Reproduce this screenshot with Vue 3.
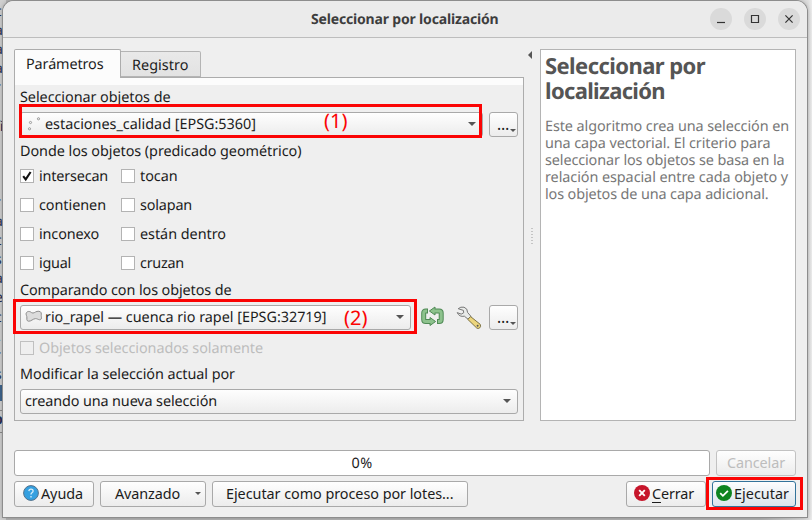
<script setup>
import { ref } from 'vue'

// Spreads the letters of a label so that it takes exactly the given width.
const vFit = {
  mounted(el, { value }) {
    const natural = el.getBoundingClientRect().width
    const count = el.textContent.length
    el.style.letterSpacing = (value - natural) / count + 'px'
  },
}

const predicates = ref([
  { label: 'intersecan', width: 69, on: true },
  { label: 'tocan', width: 37.5, on: false },
  { label: 'contienen', width: 67, on: false },
  { label: 'solapan', width: 52, on: false },
  { label: 'inconexo', width: 60, on: false },
  { label: 'están dentro', width: 86, on: false },
  { label: 'igual', width: 32, on: false },
  { label: 'cruzan', width: 44, on: false },
])

const helpLines = [
  { text: 'Este algoritmo crea una selección en', width: 244 },
  { text: 'una capa vectorial. El criterio para', width: 225.5 },
  { text: 'seleccionar los objetos se basa en la', width: 239.5 },
  { text: 'relación espacial entre cada objeto y', width: 243 },
  { text: 'los objetos de una capa adicional.', width: 223.5 },
]

const backdrop = ['c', 'a', 'a', 'a', 'r', '', 'fi', '-', '-', '-', 'r', 'a', 'c', 's', 'a', 'e', 'c', '\\', 'r', 's']
</script>

<template>
  <div class="screen">
    <div class="behind">
      <span v-for="(c, i) in backdrop" :key="i">{{ c }}</span>
      <i class="picked"></i>
      <b>p</b>
    </div>

    <div class="window">
      <header class="titlebar">
        <span class="title"><span v-fit="187.5">Seleccionar por localización</span></span>
        <div class="controls">
          <button class="round"><svg width="22" height="22"><path d="M7 14.5h8" /></svg></button>
          <button class="round"><svg width="22" height="22"><path d="M7.5 7.5h7v7h-7z" /></svg></button>
          <button class="round"><svg width="22" height="22"><path d="M7.4 7.4l7.2 7.2M14.6 7.4l-7.2 7.2" /></svg></button>
        </div>
      </header>

      <div class="main">
        <section class="left">
          <div class="tabs">
            <div class="tab active"><span v-fit="77.5">Parámetros</span></div>
            <div class="tab"><span v-fit="56.5">Registro</span></div>
          </div>
          <div class="pane">
            <div class="label first"><span v-fit="150.5">Seleccionar objetos de</span></div>
            <div class="row">
              <div class="combo wide">
                <svg class="points" width="20" height="16" viewBox="0 0 20 16">
                  <circle cx="5.5" cy="5.5" r="1.1" /><circle cx="13.5" cy="1.8" r="1.1" /><circle cx="4.5" cy="11.8" r="1.1" />
                </svg>
                <span v-fit="211">estaciones_calidad [EPSG:5360]</span>
                <i class="arrow"></i>
              </div>
              <button class="more"><span>…</span><i class="tiny"></i></button>
            </div>
            <div class="label second"><span v-fit="281.5">Donde los objetos (predicado geométrico)</span></div>
            <div class="checks">
              <label v-for="p in predicates" :key="p.label" class="check">
                <i class="box"><svg v-if="p.on" width="12" height="12" viewBox="0 0 12 12"><path d="M2.2 6.2L4.7 9.4L9.6 2" /></svg></i>
                <span v-fit="p.width">{{ p.label }}</span>
              </label>
            </div>
            <div class="label third"><span v-fit="211.5">Comparando con los objetos de</span></div>
            <div class="row">
              <div class="combo narrow">
                <svg class="poly" width="20" height="16" viewBox="0 0 20 16">
                  <path d="M1.2 4.2C2 2 4.8 2 6.5 3.6C8.5 5 10 2.8 12 2.4C14.8 1.8 16.6 3 16.3 5.2C16 7 16.8 8.4 16.2 10C15 12 12.6 9.6 10.6 9.6C8 9.6 6 12.6 3.4 12.2C1 11.8 2.2 9.4 1.8 7.6C1.5 6.4.8 5.4 1.2 4.2z" />
                </svg>
                <span v-fit="281.5">rio_rapel — cuenca rio rapel [EPSG:32719]</span>
                <i class="arrow"></i>
              </div>
              <svg class="loop" width="24" height="22" viewBox="0 0 24 22">
                <path class="edge" d="M7 5H4.7Q2.7 5 2.7 7v6.5Q2.7 15.5 4.7 15.5H9M16 15.5h2.2q2 0 2-2V7q0-2-2-2H14" />
                <path class="tip" d="M14 1v8L8.4 5zM9 11.5v8l5.6-4z" />
                <path class="fill" d="M6 5H4.7Q2.7 5 2.7 7v6.5Q2.7 15.5 4.7 15.5H10M17 15.5h1.2q2 0 2-2V7q0-2-2-2H13" />
              </svg>
              <svg class="wrench" width="26" height="24" viewBox="0 0 26 24">
                <path class="steel" d="M2.2 2.7Q4.6.5 8 1.2Q11.7 2.4 11.6 6.5L15 10.4L12 13.2L8.4 10.2Q3.5 11.3 1.2 6.6L5.2 8.1L7.7 6.8L7.4 4.4L2.2 2.7z" />
                <path class="grip" d="M14.6 10.6l9.6 7.7q1.1 2.2-.5 3.6q-1.5 1.2-3 .1L11.8 13.4z" />
                <circle cx="21.6" cy="19.8" r="1" />
              </svg>
              <button class="more"><span>…</span><i class="tiny"></i></button>
            </div>
            <label class="check only"><i class="box"></i><span v-fit="224">Objetos seleccionados solamente</span></label>
            <div class="label fourth"><span v-fit="215">Modificar la selección actual por</span></div>
            <div class="combo full"><span v-fit="192">creando una nueva selección</span><i class="arrow"></i></div>
          </div>
        </section>

        <div class="splitter"><i class="collapse"></i><i class="handle"></i></div>

        <aside class="help">
          <h1><span v-fit="160">Seleccionar por</span><br /><span v-fit="120">localización</span></h1>
          <p v-for="l in helpLines" :key="l.text"><span v-fit="l.width">{{ l.text }}</span></p>
        </aside>
      </div>

      <div class="progress-row">
        <div class="progress"><span v-fit="21">0%</span></div>
        <button class="btn cancel"><span v-fit="58">Cancelar</span></button>
      </div>

      <footer class="actions">
        <button class="btn ayuda">
          <svg width="16" height="16" viewBox="0 0 16 16">
            <circle cx="8" cy="8" r="7.4" fill="#35a0e0" stroke="#54718a" />
            <path d="M5.9 6.1Q6 4.1 8 4.1Q10.1 4.1 10.1 6Q10.1 7 8.9 7.8Q8 8.4 8 9.6M8 11v1.4" fill="none" stroke="#d9effb" stroke-width="1.3" />
          </svg>
          <span v-fit="42">Ayuda</span>
        </button>
        <button class="btn avanzado"><span v-fit="65">Avanzado</span><i class="tiny"></i></button>
        <button class="btn lotes"><span v-fit="227.5">Ejecutar como proceso por lotes...</span></button>
        <button class="btn cerrar">
          <svg width="16" height="16" viewBox="0 0 16 16">
            <circle cx="8" cy="8" r="8" fill="#c7162b" />
            <path d="M5.2 5.2l5.6 5.6M10.8 5.2l-5.6 5.6" stroke="#fff" stroke-width="1.9" />
          </svg>
          <span v-fit="42"><u>C</u>errar</span>
        </button>
        <button class="btn ejecutar">
          <svg width="16" height="16" viewBox="0 0 16 16">
            <circle cx="8" cy="8" r="8" fill="#0e8420" />
            <path d="M4.2 8.2l2.7 2.6l5-5" fill="none" stroke="#fff" stroke-width="1.8" />
          </svg>
          <span v-fit="55">Ejecutar</span>
        </button>
      </footer>
    </div>

    <div class="mark one"></div>
    <div class="mark two"></div>
    <div class="mark three"></div>
    <span class="note n1">(1)</span>
    <span class="note n2">(2)</span>
  </div>
</template>

<style>
body {
  margin: 0;
  overflow: hidden;
}
</style>

<style scoped>
* {
  box-sizing: border-box;
}
.screen {
  position: relative;
  width: 812px;
  height: 520px;
  overflow: hidden;
  padding: 1px 5px 3px 3px;
  background: linear-gradient(90deg, #b4b4b4 0, #b4b4b4 760px, #dedede 808px, #ececec 812px);
  font-family: "Noto Sans", "Open Sans", sans-serif;
  font-size: 14.4px;
  color: #1c1c1c;
  text-rendering: geometricPrecision;
  white-space: nowrap;
}
.behind {
  position: absolute;
  left: 0;
  top: 0;
  width: 6px;
  height: 520px;
  padding-top: 2px;
  background: #cfcfcf;
  display: flex;
  flex-direction: column;
  align-items: flex-start;
  overflow: hidden;
  color: #26304f;
  font-size: 14px;
}
.behind span {
  height: 19.1px;
  line-height: 19px;
  flex: none;
  margin-left: -5px;
}
.picked {
  width: 6px;
  height: 16px;
  margin-top: 1px;
  background: #3f648c;
}
.behind b {
  width: 6px;
  height: 23px;
  margin-top: 9px;
  line-height: 18px;
  text-indent: -6px;
  border-top: 1px solid #8a8a8a;
  border-bottom: 1px solid #8a8a8a;
}
.window {
  position: relative;
  width: 804px;
  height: 516px;
  background: #efefef;
  border-radius: 11px 11px 0 0;
  box-shadow: 0 0 0 1px #8d8d8d, 0 0 5px rgba(0, 0, 0, 0.35);
  display: flex;
  flex-direction: column;
}
.titlebar {
  height: 37px;
  flex: none;
  display: flex;
  align-items: center;
  justify-content: flex-end;
  background: #ebebeb;
  border-bottom: 1px solid #bdbdbd;
  border-radius: 11px 11px 0 0;
  padding-right: 7px;
}
.title {
  flex: 1;
  padding-left: 308px;
  font-weight: 700;
  font-size: 14px;
  color: #3d3d3d;
}
.controls {
  display: flex;
  gap: 12px;
}
.round {
  width: 22px;
  height: 22px;
  border: 0;
  padding: 0;
  border-radius: 50%;
  background: #dadada;
}
.round svg {
  display: block;
  fill: none;
  stroke: #333;
  stroke-width: 1.2;
}
.main {
  display: flex;
  height: 383px;
  flex: none;
  padding: 11px 11px 0;
}
.left {
  width: 510px;
  flex: none;
}
.tabs {
  display: flex;
  align-items: flex-end;
  height: 28px;
}
.tab {
  height: 26px;
  width: 80px;
  border: 1px solid #b4b4b4;
  border-left: 0;
  border-radius: 0 2px 0 0;
  background: linear-gradient(#e9e9e9, #e2e2e2);
  line-height: 27px;
  padding-left: 11px;
}
.tab.active {
  position: relative;
  height: 29px;
  width: 107px;
  margin-bottom: -1px;
  border: 1px solid #acacac;
  border-bottom: 0;
  border-radius: 2px 2px 0 0;
  background: #fcfcfc;
  line-height: 29px;
}
.pane {
  height: 344px;
  border: 1px solid #acacac;
  padding: 0 5px;
  background: linear-gradient(#fcfcfc 7px, #efefef 7px);
}
.label {
  height: 20px;
  line-height: 20px;
}
.first {
  margin-top: 10px;
}
.second {
  margin-top: 5px;
}
.third {
  margin-top: 3px;
}
.fourth {
  margin-top: 7px;
}
.row {
  display: flex;
  align-items: center;
  height: 25px;
}
.first + .row {
  margin-top: 4px;
}
.third + .row {
  margin-top: 4px;
}
.combo,
.btn,
.more {
  height: 25px;
  border: 1px solid #a9a9a9;
  border-radius: 3px;
  background: linear-gradient(#fefefe, #ececec);
  font: inherit;
  color: inherit;
  display: flex;
  align-items: center;
  padding: 0;
  flex: none;
}
.combo {
  padding: 0 6px 1px 4px;
}
.combo .arrow {
  margin-left: auto;
}
.combo svg {
  flex: none;
}
.wide {
  width: 463px;
  padding-bottom: 0;
}
.wide .arrow {
  margin-bottom: 2px;
}
.narrow {
  width: 391px;
}
.full {
  width: 498px;
  margin-top: 4px;
}
.arrow {
  border: 4px solid transparent;
  border-top: 4px solid #555;
  border-bottom: 0;
}
.points circle {
  fill: #f4f4f4;
  stroke: #888;
  stroke-width: 0.8;
}
.poly path {
  fill: #dcdcdc;
  stroke: #8d8d8d;
}
.more {
  position: relative;
  width: 29px;
  margin-left: auto;
  margin-right: 0;
  padding: 0 0 2px 7px;
}
.more span {
  font-size: 15.5px;
}
.tiny {
  border: 3px solid transparent;
  border-top: 3px solid #555;
  border-bottom: 0;
}
.more .tiny {
  position: absolute;
  right: 1px;
  bottom: 4px;
}
.loop {
  margin: 0 0 1px 10px;
}
.loop .edge {
  fill: none;
  stroke: #4f8a55;
  stroke-width: 5;
}
.loop .tip {
  fill: #8dc28d;
  stroke: #4f8a55;
}
.loop .fill {
  fill: none;
  stroke: #8dc28d;
  stroke-width: 3;
}
.wrench {
  margin-left: 11px;
}
.steel {
  fill: #e9ebe9;
  stroke: #777;
}
.grip {
  fill: #ecd57c;
  stroke: #7d7346;
}
.wrench circle {
  fill: #555;
}
.checks {
  display: grid;
  grid-template-columns: 101px 1fr;
  grid-auto-rows: 29px;
}
.check {
  display: flex;
  align-items: center;
}
.box {
  width: 14px;
  height: 14px;
  margin-right: 5px;
  border: 1px solid #b3b3b3;
  background: #fff;
  flex: none;
}
.checks .box {
  margin-bottom: 2px;
}
.box svg {
  display: block;
  fill: none;
  stroke: #111;
  stroke-width: 2.1;
}
.only {
  height: 20px;
  margin-top: 8px;
  color: #bdbdbd;
}
.only .box {
  background: #efefef;
  border-color: #c0c0c0;
}
.splitter {
  width: 16px;
  flex: none;
  display: flex;
  flex-direction: column;
  align-items: flex-end;
}
.collapse {
  margin: 2px 8px 0 0;
  border: 4px solid transparent;
  border-right: 4px solid #555;
  border-left: 0;
}
.handle {
  width: 2px;
  height: 17px;
  margin: 169px 7px 0 0;
  background: repeating-linear-gradient(#c4c4c4 0 1px, #efefef 1px 3px);
}
.help {
  width: 256px;
  height: 372px;
  border: 1px solid #b4b4b4;
  background: #fff;
  padding: 4px 4px;
  color: #777;
}
h1 {
  margin: 0 0 14px;
  font-size: 22px;
  line-height: 25px;
  color: #555;
  font-weight: 700;
}
p {
  margin: 0;
  height: 17px;
  line-height: 17px;
}
.progress-row {
  display: flex;
  gap: 6px;
  padding: 29px 11px 0;
}
.progress {
  width: 696px;
  height: 26px;
  border: 1px solid #a9a9a9;
  border-radius: 3px;
  background: #fff;
  display: flex;
  align-items: center;
  justify-content: center;
  color: #1c1c1c;
}
.btn {
  height: 26px;
  padding-bottom: 2px;
}
.cancel {
  width: 80px;
  padding-left: 10px;
  color: #bdbdbd;
  border-color: #c2c2c2;
}
.actions {
  display: flex;
  gap: 6px;
  padding: 5px 11px 0;
}
.ayuda {
  width: 80px;
  padding-left: 8px;
  gap: 2px;
}
.avanzado {
  width: 106px;
  padding: 0 4px 2px 14px;
}
.avanzado .tiny {
  margin-left: auto;
}
.lotes {
  width: 256px;
  padding-left: 13px;
}
.cerrar {
  width: 80px;
  margin-left: auto;
  padding-left: 7px;
  gap: 2px;
}
.cerrar u {
  text-underline-offset: 3px;
}
.ejecutar {
  width: 84px;
  padding-left: 3px;
  gap: 2px;
  border-color: #33739b;
  background: linear-gradient(#fdfdfe, #dbe4ec);
}
.mark {
  position: absolute;
  border: 3px solid #fb0404;
}
.one {
  left: 19px;
  top: 104px;
  width: 463px;
  height: 34px;
}
.two {
  left: 13px;
  top: 299px;
  width: 404px;
  height: 35px;
}
.three {
  left: 706px;
  top: 477px;
  width: 97px;
  height: 33px;
}
.note {
  position: absolute;
  color: #fb0404;
  font-size: 20px;
  line-height: 24px;
  font-weight: 400;
}
.n1 {
  left: 324px;
  top: 109px;
}
.n2 {
  left: 344px;
  top: 306px;
}
</style>
